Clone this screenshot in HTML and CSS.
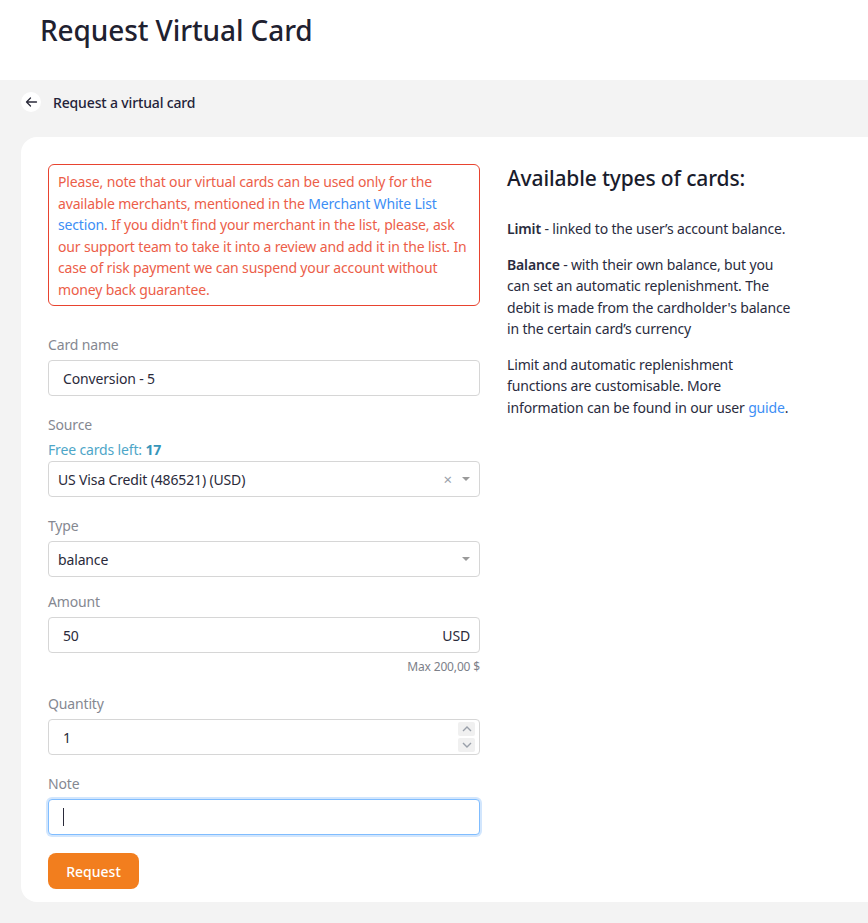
FILE: index.html
```
<!DOCTYPE html>
<html lang="en">
<head>
<meta charset="utf-8">
<title>Request Virtual Card</title>
<link rel="stylesheet" href="styles.css">
</head>
<body>
<header class="page-header">
  <h1 class="page-title">Request Virtual Card</h1>
</header>
<main class="page-body">
  <div class="crumb">
    <span class="back-btn">
      <svg width="13" height="12" viewBox="0 0 13 12" fill="none" stroke="#2a2a3a" stroke-width="1.3" stroke-linecap="round" stroke-linejoin="round"><path d="M11.5 6H1.5M5.5 2L1.5 6l4 4"/></svg>
    </span>
    <span class="crumb-text">Request a virtual card</span>
  </div>
  <section class="card">
    <form class="form-col">
      <div class="alert">
        Please, note that our virtual cards can be used only for the available merchants, mentioned in the <a class="link">Merchant White List</a> <a class="link">section</a>. If you didn't find your merchant in the list, please, ask our support team to take it into a review and add it in the list. In case of risk payment we can suspend your account without money back guarantee.
      </div>

      <div class="field">
        <label class="label">Card name</label>
        <div class="input"><span class="val pad14">Conversion - 5</span></div>
      </div>

      <div class="field">
        <label class="label">Source</label>
        <div class="hint-teal">Free cards left: <b>17</b></div>
        <div class="input select">
          <span class="val">US Visa Credit (486521) (USD)</span>
          <span class="clear">×</span>
          <span class="caret"></span>
        </div>
      </div>

      <div class="field field-type">
        <label class="label">Type</label>
        <div class="input select">
          <span class="val">balance</span>
          <span class="caret"></span>
        </div>
      </div>

      <div class="field">
        <label class="label">Amount</label>
        <div class="input">
          <span class="val pad14">50</span>
          <span class="suffix">USD</span>
        </div>
        <div class="max">Max 200,00 $</div>
      </div>

      <div class="field">
        <label class="label">Quantity</label>
        <div class="input">
          <span class="val pad14">1</span>
          <span class="spinner">
            <span class="spin-btn"><svg width="10" height="6" viewBox="0 0 10 6" fill="none" stroke="#9aa0aa" stroke-width="1.4"><path d="M1 5l4-4 4 4"/></svg></span>
            <span class="spin-btn"><svg width="10" height="6" viewBox="0 0 10 6" fill="none" stroke="#9aa0aa" stroke-width="1.4"><path d="M1 1l4 4 4-4"/></svg></span>
          </span>
        </div>
      </div>

      <div class="field field-note">
        <label class="label">Note</label>
        <div class="input focused"><span class="cursor"></span></div>
      </div>

      <button type="button" class="btn">Request</button>
    </form>

    <aside class="info-col">
      <h2 class="info-title">Available types of cards:</h2>
      <p class="info-p"><b>Limit</b> - linked to the user’s account balance.</p>
      <p class="info-p"><b>Balance</b> - with their own balance, but you can set an automatic replenishment. The debit is made from the cardholder's balance in the certain card’s currency</p>
      <p class="info-p">Limit and automatic replenishment functions are customisable. More information can be found in our user <a class="link">guide</a>.</p>
    </aside>
  </section>
</main>
</body>
</html>
```

FILE: styles.css
```
* { box-sizing: border-box; }
html, body { margin: 0; padding: 0; }
body {
  font-family: "Noto Sans", "Open Sans", sans-serif;
  color: #23233a;
  background: #f3f3f3;
  overflow: hidden;
  width: 868px;
  height: 923px;
  letter-spacing: -0.15px;
}
.page-header {
  background: #fff;
  height: 80px;
  padding: 12px 40px 0;
}
.page-title {
  margin: 0;
  font-size: 28px;
  font-weight: 500;
  line-height: 36px;
  color: #1f2130;
  letter-spacing: -0.1px;
}
.page-body {
  padding: 12px 0 0 21px;
}
.crumb {
  display: flex;
  align-items: center;
  gap: 12px;
  height: 20px;
}
.back-btn {
  width: 20px;
  height: 20px;
  border-radius: 50%;
  background: #fff;
  display: flex;
  align-items: center;
  justify-content: center;
}
.crumb-text {
  font-size: 14px;
  font-weight: 500;
  color: #23233a;
}
.card {
  margin-top: 25px;
  margin-right: -30px;
  background: #fff;
  border-radius: 16px;
  padding: 27px 27px 13px;
  display: flex;
  gap: 27px;
  align-items: flex-start;
}
.form-col {
  width: 432px;
  flex: none;
}
.alert {
  border: 1px solid #e8432f;
  border-radius: 6px;
  padding: 6px 9px 5px;
  font-size: 14px;
  line-height: 21.5px;
  color: #ec5e49;
  margin-bottom: 29px;
}
.link { color: #3d8ef5; text-decoration: none; }
.field { margin-bottom: 19px; }
.field-type { margin-bottom: 15px; }
.field-note { margin-bottom: 18px; }
.label {
  display: block;
  font-size: 14px;
  line-height: 20px;
  color: #858891;
  margin-bottom: 5px;
}
.hint-teal {
  font-size: 14px;
  line-height: 20px;
  color: #4ea6c8;
  margin-top: 1px;
  margin-bottom: 1px;
}
.hint-teal b { color: #3796ba; font-weight: 700; }
.input {
  height: 36px;
  border: 1px solid #d6d6d6;
  border-radius: 4px;
  display: flex;
  align-items: center;
  padding: 0 9px;
  font-size: 14px;
  color: #2a2a3a;
  background: #fff;
}
.val { flex: 1; }
.pad14 { padding-left: 5px; }
.select .val { padding-left: 0; }
.clear {
  color: #9aa0aa;
  font-size: 15px;
  margin-right: 10px;
}
.caret {
  width: 0; height: 0;
  border-left: 4px solid transparent;
  border-right: 4px solid transparent;
  border-top: 4px solid #9a9a9a;
}
.suffix { font-size: 14px; color: #2a2a3a; }
.max {
  text-align: right;
  font-size: 12px;
  line-height: 16px;
  color: #7d8089;
  margin-top: 6px;
}
.spinner {
  display: flex;
  flex-direction: column;
  gap: 2px;
  margin-right: -5px;
}
.spin-btn {
  width: 17px;
  height: 14px;
  background: #f0f0f0;
  border-radius: 2px;
  display: flex;
  align-items: center;
  justify-content: center;
}
.focused {
  border: 1px solid #80bdff;
  box-shadow: 0 0 0 2px #d2e6fd;
  padding-left: 14px;
}
.cursor {
  width: 1px;
  height: 18px;
  background: #2a2a3a;
}
.btn {
  width: 91px;
  height: 36px;
  border: none;
  border-radius: 8px;
  background: #f27e1e;
  color: #fff;
  font-family: inherit;
  font-size: 14px;
  font-weight: 500;
  display: block;
}
.info-col {
  width: 286px;
  flex: none;
}
.info-title {
  margin: 0 0 26px;
  font-size: 21px;
  font-weight: 500;
  line-height: 28px;
  color: #1a1c2c;
  white-space: nowrap;
}
.info-p {
  margin: 0 0 14px;
  font-size: 14px;
  line-height: 21.5px;
  color: #2a2c3e;
}
.info-p b { font-weight: 600; }
```
